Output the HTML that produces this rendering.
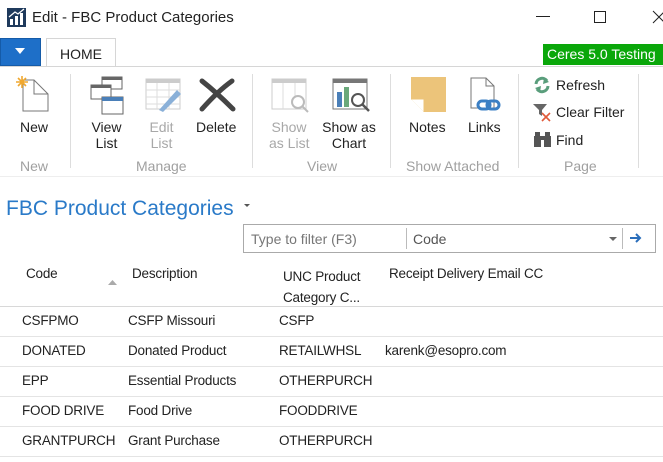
<!DOCTYPE html>
<html><head><style>
*{margin:0;padding:0;box-sizing:border-box}
body{width:663px;height:462px;overflow:hidden;background:#fff;font-family:"Liberation Sans",sans-serif;color:#222;position:relative;font-size:14px}
.a{position:absolute;white-space:nowrap}
.g{color:#a8a8a8}
.lbl{font-size:14px;text-align:center;line-height:16px}
.grp{color:#a0a0a0;font-size:14px}
.sep{position:absolute;top:74px;width:1px;height:94px;background:#ddd}
.rl{position:absolute;left:0;width:663px;height:1px;background:#e4e4e4}
.t{font-size:13.5px;letter-spacing:-0.2px}
</style></head><body>
<svg class="a" style="left:7px;top:8px" width="19" height="19" viewBox="0 0 19 19"><rect width="19" height="19" fill="#1f3a5c"/><rect x="3" y="11" width="3" height="6" fill="#fff"/><rect x="8" y="8" width="3" height="9" fill="#fff"/><rect x="13" y="5" width="3" height="12" fill="#fff"/><path d="M2 9 L8 4 L11 6 L17 1" stroke="#fff" stroke-width="1.3" fill="none"/></svg>
<div class="a" style="left:32px;top:9px;font-size:15px">Edit - FBC Product Categories</div>
<div class="a" style="left:536px;top:16px;width:14px;height:1px;background:#222"></div>
<div class="a" style="left:594px;top:11px;width:12px;height:12px;border:1px solid #222"></div>
<svg class="a" style="left:652px;top:10px" width="12" height="14"><path d="M1 1L13 13M13 1L1 13" stroke="#222" stroke-width="1"/></svg>
<div class="a" style="left:0;top:38px;width:41px;height:28px;background:#1e6fc8;border:1px solid #155ba8"></div>
<svg class="a" style="left:15px;top:48px" width="10" height="7"><path d="M0 0H10L5 6Z" fill="#fff"/></svg>
<div class="a" style="left:46px;top:38px;width:70px;height:29px;border:1px solid #d6d6d6;border-bottom:none;background:#fff"></div>
<div class="a" style="left:60px;top:46px;font-size:14px">HOME</div>
<div class="a" style="left:0;top:66px;width:663px;height:1px;background:#d6d6d6"></div>
<div class="a" style="left:543px;top:44px;width:120px;height:21px;background:#0aa70a;color:#fff;font-size:14px;padding:2px 0 0 4px">Ceres 5.0 Testing</div>
<div class="sep" style="left:70px"></div><div class="sep" style="left:252px"></div><div class="sep" style="left:390px"></div><div class="sep" style="left:518px"></div><div class="sep" style="left:638px"></div>
<div class="a" style="left:0;top:176px;width:663px;height:1px;background:#eee"></div>
<svg class="a" style="left:16px;top:76px" width="34" height="38"><path d="M7 4H18L32 18V35H7Z" fill="#fff" stroke="#777"/><path d="M18 4V18H32" fill="none" stroke="#777"/><g stroke="#f0a830" stroke-width="1.6"><path d="M6 0V12M0 6H12M2 2L10 10M10 2L2 10"/></g></svg>
<div class="a lbl" style="left:20px;top:119px">New</div>
<div class="a grp" style="left:20px;top:158px">New</div>
<svg class="a" style="left:90px;top:76px" width="34" height="40"><rect x="12" y="1" width="20" height="12" fill="#fff" stroke="#666"/><rect x="12" y="1" width="20" height="3" fill="#666"/><rect x="1" y="9" width="20" height="14" fill="#fff" stroke="#666"/><rect x="1" y="9" width="20" height="3" fill="#666"/><rect x="12" y="21" width="21" height="17" fill="#fff" stroke="#666"/><rect x="12" y="21" width="21" height="4" fill="#4a7fb8"/></svg>
<div class="a lbl" style="left:90px;top:119px;width:33px">View<br>List</div>
<svg class="a" style="left:145px;top:78px" width="38" height="36"><rect x="1" y="1" width="34" height="30" fill="#fff" stroke="#ccc"/><rect x="1" y="1" width="34" height="4" fill="#ccc"/><path d="M1 12H35M1 19H35M1 26H35M12 5V31M24 5V31" stroke="#ddd"/><path d="M14 32L32 12L36 16L18 34Z" fill="#8ab0d8"/></svg>
<div class="a lbl g" style="left:148px;top:119px;width:27px">Edit<br>List</div>
<svg class="a" style="left:198px;top:78px" width="40" height="34"><path d="M4 3Q18 14 35 31M34 3Q20 13 4 31" stroke="#444" stroke-width="5" fill="none" stroke-linecap="round"/></svg>
<div class="a lbl" style="left:196px;top:119px">Delete</div>
<div class="a grp" style="left:136px;top:158px">Manage</div>
<svg class="a" style="left:271px;top:78px" width="40" height="36"><rect x="1" y="1" width="34" height="30" fill="#fff" stroke="#ccc"/><rect x="1" y="1" width="34" height="4" fill="#ccc"/><path d="M12 5V31M24 5V31" stroke="#ddd"/><circle cx="27" cy="24" r="6" fill="#fff" stroke="#bbb" stroke-width="2"/><path d="M31 28L37 34" stroke="#bbb" stroke-width="2"/></svg>
<div class="a lbl g" style="left:269px;top:119px;width:40px">Show<br>as List</div>
<svg class="a" style="left:332px;top:78px" width="40" height="36"><rect x="1" y="1" width="34" height="30" fill="#fff" stroke="#777"/><rect x="1" y="1" width="34" height="4" fill="#777"/><rect x="5" y="14" width="5" height="15" fill="#4a7fb8"/><rect x="12" y="9" width="5" height="20" fill="#6aa87a"/><circle cx="26" cy="22" r="6" fill="#fff" stroke="#555" stroke-width="2"/><path d="M30 26L37 33" stroke="#555" stroke-width="2.5"/></svg>
<div class="a lbl" style="left:321px;top:119px;width:56px">Show as<br>Chart</div>
<div class="a grp" style="left:307px;top:158px">View</div>
<svg class="a" style="left:411px;top:77px" width="36" height="36"><path d="M0 0H35V35H13L0 22Z" fill="#ecc47a"/><path d="M0 22H13V35" fill="#fff" stroke="#ecc47a"/></svg>
<div class="a lbl" style="left:409px;top:119px">Notes</div>
<svg class="a" style="left:469px;top:77px" width="36" height="36"><path d="M2 1H17L25 9V31H2Z" fill="#fff" stroke="#777"/><path d="M17 1V9H25" fill="none" stroke="#777"/><rect x="9" y="24" width="12" height="8" rx="4" fill="none" stroke="#3b7fc4" stroke-width="3"/><rect x="18" y="24" width="12" height="8" rx="4" fill="none" stroke="#3b7fc4" stroke-width="3"/></svg>
<div class="a lbl" style="left:468px;top:119px">Links</div>
<div class="a grp" style="left:406px;top:158px">Show Attached</div>
<svg class="a" style="left:533px;top:76px" width="18" height="18"><path d="M3 8A6 6 0 0 1 14 5" stroke="#5a9e7c" stroke-width="3" fill="none"/><path d="M11 2L16 6L10 8Z" fill="#5a9e7c"/><path d="M15 10A6 6 0 0 1 4 13" stroke="#5a9e7c" stroke-width="3" fill="none"/><path d="M7 16L2 12L8 10Z" fill="#5a9e7c"/></svg>
<div class="a" style="left:556px;top:77px">Refresh</div>
<svg class="a" style="left:533px;top:103px" width="20" height="20"><path d="M0 1H14L9 7V13L6 11V7Z" fill="#666"/><path d="M9 10L17 18M17 10L9 18" stroke="#e05a3a" stroke-width="1.6"/></svg>
<div class="a" style="left:556px;top:104px">Clear Filter</div>
<svg class="a" style="left:533px;top:131px" width="19" height="17"><rect x="1" y="5" width="7" height="11" fill="#555"/><rect x="11" y="5" width="7" height="11" fill="#555"/><rect x="2" y="1" width="5" height="5" fill="#555"/><rect x="12" y="1" width="5" height="5" fill="#555"/><rect x="7" y="5" width="5" height="4" fill="#555"/></svg>
<div class="a" style="left:556px;top:132px">Find</div>
<div class="a grp" style="left:564px;top:158px">Page</div>
<div class="a" style="left:6px;top:197px;font-size:21px;color:#2a7ac8">FBC Product Categories</div>
<svg class="a" style="left:244px;top:204px" width="6" height="4"><path d="M0 0H6L3 3Z" fill="#555"/></svg>
<div class="a" style="left:243px;top:224px;width:413px;height:29px;border:1px solid #aaa"></div>
<div class="a" style="left:251px;top:231px;color:#777">Type to filter (F3)</div>
<div class="a" style="left:406px;top:228px;width:1px;height:21px;background:#bbb"></div>
<div class="a" style="left:413px;top:231px;color:#555">Code</div>
<svg class="a" style="left:609px;top:237px" width="8" height="5"><path d="M0 0H8L4 4Z" fill="#666"/></svg>
<div class="a" style="left:622px;top:228px;width:1px;height:21px;background:#bbb"></div>
<svg class="a" style="left:630px;top:233px" width="12" height="10"><path d="M0 5H10M6 1L10 5L6 9" stroke="#2a6ebb" stroke-width="2" fill="none"/></svg>
<div class="a t" style="left:26px;top:266px">Code</div>
<svg class="a" style="left:108px;top:280px" width="9" height="5"><path d="M0 5H9L4.5 0Z" fill="#aaa"/></svg>
<div class="a t" style="left:132px;top:266px">Description</div>
<div class="a t" style="left:283px;top:266px;line-height:21px">UNC Product<br>Category C...</div>
<div class="a t" style="left:389px;top:266px">Receipt Delivery Email CC</div>
<div class="rl" style="top:306px;background:#d8d8d8"></div>
<div class="rl" style="top:336px"></div><div class="rl" style="top:366px"></div><div class="rl" style="top:396px"></div><div class="rl" style="top:426px"></div><div class="rl" style="top:456px"></div>
<div class="a t" style="left:22px;top:313px">CSFPMO</div><div class="a t" style="left:128px;top:313px">CSFP Missouri</div><div class="a t" style="left:279px;top:313px">CSFP</div>
<div class="a t" style="left:22px;top:343px">DONATED</div><div class="a t" style="left:128px;top:343px">Donated Product</div><div class="a t" style="left:279px;top:343px">RETAILWHSL</div><div class="a t" style="left:385px;top:343px">karenk@esopro.com</div>
<div class="a t" style="left:22px;top:373px">EPP</div><div class="a t" style="left:128px;top:373px">Essential Products</div><div class="a t" style="left:279px;top:373px">OTHERPURCH</div>
<div class="a t" style="left:22px;top:403px">FOOD DRIVE</div><div class="a t" style="left:128px;top:403px">Food Drive</div><div class="a t" style="left:279px;top:403px">FOODDRIVE</div>
<div class="a t" style="left:22px;top:433px">GRANTPURCH</div><div class="a t" style="left:128px;top:433px">Grant Purchase</div><div class="a t" style="left:279px;top:433px">OTHERPURCH</div>
</body></html>
